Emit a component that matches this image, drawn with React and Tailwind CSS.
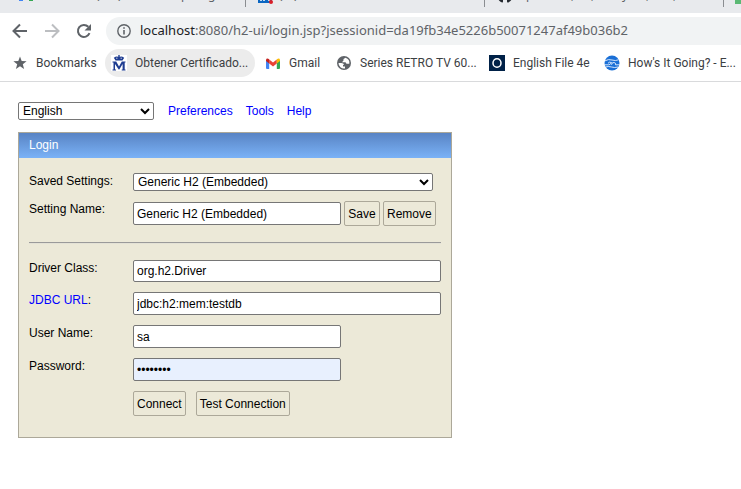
import React from "react";

const fieldClass =
  "block rounded-[2px] border border-[#767676] px-[3px] text-black outline-none";
const buttonClass =
  "h-[25px] rounded-[2px] border border-[#aca899] bg-[#ece9d8] px-[3px] text-black whitespace-nowrap";
const selectClass =
  "block h-[18px] rounded-[2px] border border-[#767676] bg-white text-black";

function TabStrip() {
  return (
    <div className="h-[13px] overflow-hidden bg-[#e8eaed] text-xs leading-4 text-[#5f6368]" aria-hidden="true">
      <div className="-mt-[13px] flex h-[33px]">
        <div className="flex h-5 w-[246px] shrink-0 border-r border-[#8a8d91] pl-[18px]">
          <svg className="mt-[2px] h-3 w-4 shrink-0" viewBox="0 0 16 12">
            <rect x="1" y="6" width="4" height="6" fill="#4285f4" />
            <rect x="11" y="6" width="4" height="6" fill="#34a853" />
          </svg>
          <span className="ml-[62px] w-[22px]">(</span>
          <span className="w-[63px]">)</span>
          <span className="w-[27px]">p</span>
          <span>g</span>
        </div>
        <div className="flex h-5 w-[239px] shrink-0 border-r border-[#8a8d91] pl-3">
          <svg className="h-[17px] w-[15px] shrink-0" viewBox="0 0 15 17">
            <rect y="2" width="14" height="14" fill="#0a66c2" />
            <path d="M3 7v7M6 14V8M6 10q4-4 5 0v4" stroke="#fff" strokeWidth="1.5" fill="none" />
            <circle cx="13" cy="15" r="2" fill="#d91e28" />
          </svg>
          <span className="ml-[6px] w-[15px]">(</span>
          <span>)</span>
        </div>
        <div className="flex h-5 w-[239px] shrink-0 border-r border-[#8a8d91] pl-3">
          <svg className="h-4 w-4 shrink-0" viewBox="0 0 16 16">
            <path d="M8 1a7.5 7.5 0 0 0-3 14.5q1 .3 1-1v-1.8q-2 .3-2.7-1.2M8 1a7.5 7.5 0 0 1 3 14.5q-1 .3-1-1v-3" fill="#24292f" />
          </svg>
          <span className="ml-[13px] w-[45px]">p</span>
          <span className="w-[20px]">,</span>
          <span className="w-[31px]">,</span>
          <span className="w-[24px]">y</span>
          <span className="w-[27px]">,</span>
          <span>,</span>
        </div>
        <div className="ml-[11px] h-[17px] w-4 bg-[#5bb974]" />
      </div>
    </div>
  );
}

function Arrow({ forward }) {
  return (
    <svg className="h-4 w-4" viewBox="0 0 16 16" fill="none" stroke={forward ? "#bcbec1" : "#5f6368"} strokeWidth="2">
      {forward ? <path d="M1 8h13M8 1.500l6.500 6.500-6.500 6.500" /> : <path d="M15 8H2M8 1.500L1.500 8l6.500 6.500" />}
    </svg>
  );
}

function Toolbar() {
  return (
    <div className="flex h-9 items-center bg-white">
      <div className="flex w-[106px] shrink-0 items-center gap-4 pl-3">
        <button type="button" aria-label="Back"><Arrow /></button>
        <button type="button" aria-label="Forward"><Arrow forward /></button>
        <button type="button" aria-label="Reload">
          <svg className="h-4 w-4" viewBox="0 0 16 16">
            <path d="M13.500 10.200A6 6 0 1 1 12.300 3.800" fill="none" stroke="#5f6368" strokeWidth="2" />
            <path d="M15 1v6.500H8.500z" fill="#5f6368" />
          </svg>
        </button>
      </div>
      <div className="flex h-7 min-w-0 grow items-center gap-[9px] overflow-hidden rounded-l-full bg-[#f1f3f4] pl-[11px] font-['Noto_Sans',sans-serif] text-[13px]">
        <svg className="h-[14px] w-[14px] shrink-0" viewBox="0 0 14 14" fill="none" stroke="#5f6368">
          <circle cx="7" cy="7" r="6.2" strokeWidth="1.4" />
          <path d="M7 6v4.5M7 3.2v1.6" strokeWidth="1.6" />
        </svg>
        <span className="whitespace-nowrap text-[#5f6368]">
          <span className="text-[#202124]">localhost</span>:8080/h2-ui/login.jsp?jsessionid=da19fb34e5226b50071247af49b036b2
        </span>
      </div>
    </div>
  );
}

function Bookmarks() {
  return (
    <nav className="flex h-[33px] items-start overflow-hidden border-b border-[#d9dadc] bg-white font-[Roboto,sans-serif] text-xs whitespace-nowrap text-[#3c4043]">
      <a href="#bookmarks" className="flex h-7 w-[105px] shrink-0 items-center gap-[9px] pl-[13px]">
        <svg className="h-[14px] w-[14px] shrink-0" viewBox="0 0 14 14">
          <path d="M7 .5l1.7 4.6 4.9.2-3.8 3 1.3 4.7L7 10.3 2.9 13l1.3-4.7-3.8-3 4.9-.2z" fill="#5f6368" />
        </svg>
        Bookmarks
      </a>
      <a href="#certificado" className="flex h-7 w-[150px] shrink-0 items-center gap-2 rounded-full bg-[#ececec] pl-[6px]">
        <svg className="h-4 w-4 shrink-0" viewBox="0 0 16 16">
          <rect width="16" height="16" fill="#fff" />
          <path d="M4.500 5.500L2.800 2.800 5 1.500l2.300.3V0h1.400v1.800L11 1.500l2.200 1.300-1.700 2.700z" fill="#1f3d91" />
          <path d="M5 3.200h1.500M9.500 3.200H11" stroke="#fff" strokeWidth=".7" />
          <path d="M1.500 6.500h3.700L8 11.500l2.800-5h3.700v1H13.700v7h.8v1h-3.800v-1h.9V9L8.300 14.500h-.6L4 9v5.500h1v1H1.500v-1h1v-7h-1z" fill="#1f3d91" />
        </svg>
        Obtener Certificado...
      </a>
      <a href="#gmail" className="flex h-7 w-[81px] shrink-0 items-center gap-[9px] pl-[11px]">
        <svg className="h-[11px] w-[14px] shrink-0" viewBox="0 0 14 11">
          <path d="M0 2v8q0 1 1 1h2.200V4z" fill="#4285f4" />
          <path d="M14 2v8q0 1-1 1h-2.200V4z" fill="#34a853" />
          <path d="M3.200 1.500L7 4.400l3.800-2.900v4L7 8.500 3.200 5.500z" fill="#ea4335" />
          <path d="M0 2Q.5-.5 3.200 1.200v4.300L0 3z" fill="#c5221f" />
          <path d="M14 2q-.5-2.500-3.200-.8v4.300L14 3z" fill="#fbbc04" />
        </svg>
        Gmail
      </a>
      <a href="#series" className="flex h-7 w-[153px] shrink-0 items-center gap-[9px] pl-[1px]">
        <svg className="h-[14px] w-[14px] shrink-0" viewBox="0 0 14 14">
          <circle cx="7" cy="7" r="7" fill="#5f6368" />
          <path d="M8.500 1.700L6.500 3v1.500L5 6.200h3.500l1 1.600h2.800A5.500 5.500 0 0 0 8.500 1.700z" fill="#fff" />
          <path d="M1.500 7h2.800q2.500 0 2.700 2h-1v1.500h2v2A5.500 5.500 0 0 1 1.500 7z" fill="#fff" />
        </svg>
        Series RETRO TV 60...
      </a>
      <a href="#english" className="flex h-7 w-[115px] shrink-0 items-center gap-2">
        <svg className="h-4 w-4 shrink-0" viewBox="0 0 16 16">
          <rect width="16" height="16" fill="#002147" />
          <ellipse cx="8" cy="8" rx="4" ry="4.300" fill="none" stroke="#fff" strokeWidth="1.500" />
        </svg>
        English File 4e
      </a>
      <a href="#going" className="flex h-7 shrink-0 items-center gap-2">
        <svg className="h-4 w-4 shrink-0" viewBox="0 0 16 16">
          <circle cx="8" cy="8" r="7.500" fill="#1a6fd6" />
          <path d="M1 5.800q3.500-2 7-.8t6.500-.2M.5 9.800h4q2 0 3-2.300-2.500-1-3.500.8M7.500 9.800q.3-2.600 2.500-2.300t1.500 2.300h4M1.500 12q3-1 6 0t6.500 0" fill="none" stroke="#e8f2ff" strokeWidth=".9" />
        </svg>
        How's It Going? - E...
      </a>
    </nav>
  );
}

function Row({ id, label, children }) {
  return (
    <div className="flex items-start">
      <label htmlFor={id} className="w-[104px] shrink-0 leading-4">{label}</label>
      {children}
    </div>
  );
}

export default function App() {
  return (
    <div className="min-h-screen bg-white">
      <header>
        <TabStrip />
        <Toolbar />
        <Bookmarks />
      </header>
      <main className="px-[18px] pt-5 font-['Liberation_Sans',Arial,sans-serif] text-xs text-black">
        <div className="flex items-center gap-[14px]">
          <select aria-label="Language" className={`${selectClass} w-[136px]`}>
            <option>English</option>
          </select>
          <nav className="flex gap-[13px] text-[#0000ff]">
            <a href="#preferences">Preferences</a>
            <a href="#tools">Tools</a>
            <a href="#help">Help</a>
          </nav>
        </div>
        <form className="mt-3 max-w-[434px] border border-[#aca899] bg-[#ece9d8]" onSubmit={(e) => e.preventDefault()}>
          <h1 className="h-[25px] bg-linear-to-b from-[#5984c4] to-[#7ab2f7] px-[10px] leading-6 text-white">Login</h1>
          <div className="px-[10px] pt-[15px] pb-[21px]">
            <Row id="setting" label="Saved Settings:">
              <select id="setting" className={`${selectClass} w-[300px]`}>
                <option>Generic H2 (Embedded)</option>
              </select>
            </Row>
            <div className="mt-[10px] flex items-start">
              <label htmlFor="name" className="w-[104px] shrink-0 leading-4">Setting Name:</label>
              <div className="flex items-center gap-[3px]">
                <input id="name" type="text" defaultValue="Generic H2 (Embedded)" className={`${fieldClass} h-[23px] w-[208px] bg-white`} />
                <button type="button" className={`${buttonClass} min-w-9`}>Save</button>
                <button type="button" className={buttonClass}>Remove</button>
              </div>
            </div>
            <hr className="mt-4 h-[2px] border-t border-b border-t-[#9a9a9a] border-b-[#e4e2d6]" />
            <div className="mt-4 flex flex-col gap-[10px]">
              <Row id="driver" label="Driver Class:">
                <input id="driver" type="text" defaultValue="org.h2.Driver" className={`${fieldClass} h-[22px] min-w-0 grow bg-white`} />
              </Row>
              <Row id="url" label={<><a href="#jdbc" className="text-[#0000ff]">JDBC URL</a>:</>}>
                <input id="url" type="text" defaultValue="jdbc:h2:mem:testdb" className={`${fieldClass} h-[23px] min-w-0 grow bg-white`} />
              </Row>
              <Row id="user" label="User Name:">
                <input id="user" type="text" defaultValue="sa" className={`${fieldClass} h-[23px] w-[208px] bg-white`} />
              </Row>
              <Row id="password" label="Password:">
                <input id="password" type="password" defaultValue="password" className={`${fieldClass} h-[23px] w-[208px] bg-[#e8f0fe]`} />
              </Row>
              <div className="flex gap-[10px] pl-[104px]">
                <button type="submit" className={buttonClass}>Connect</button>
                <button type="button" className={buttonClass}>Test Connection</button>
              </div>
            </div>
          </div>
        </form>
      </main>
    </div>
  );
}
